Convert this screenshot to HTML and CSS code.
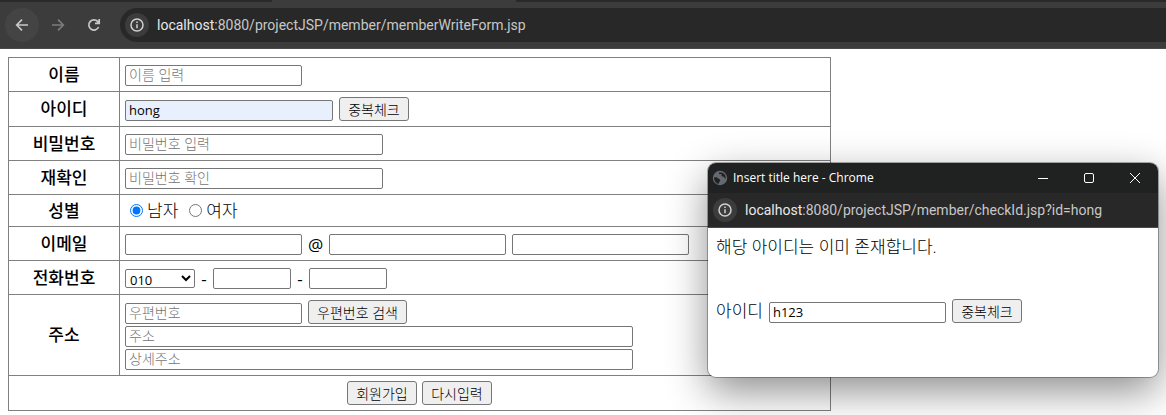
FILE: index.html
```html
<!DOCTYPE html>
<html lang="ko">
<head>
<meta charset="utf-8">
<title>회원가입</title>
<link rel="stylesheet" href="styles.css">
</head>
<body>
<header class="browser">
  <div class="tabstrip"><span class="tab-active"></span></div>
  <div class="toolbar">
    <button type="button" class="nav nav-back" aria-label="뒤로"><svg width="16" height="16" viewBox="0 0 16 16"><path d="M14 8H3M8 2.7 2.7 8 8 13.300"/></svg></button>
    <button type="button" class="nav nav-forward" aria-label="앞으로"><svg width="16" height="16" viewBox="0 0 16 16"><path d="M2 8h11M8 2.700 13.300 8 8 13.300"/></svg></button>
    <button type="button" class="nav nav-reload" aria-label="새로고침"><svg width="16" height="16" viewBox="0 0 16 16"><path d="M12.600 10a5.100 5.100 0 1 1-.8-5.400L13 6M13.200 2v4.300H9"/></svg></button>
    <div class="omnibox">
      <span class="info"><svg width="16" height="16" viewBox="0 0 16 16"><circle cx="8" cy="8" r="6"/><path d="M8 7.200v4M8 4.500v1.600"/></svg></span>
      <span class="url"><b>localhost</b>:8080/projectJSP/member/memberWriteForm.jsp</span>
    </div>
  </div>
</header>

<main class="page">
  <form>
    <table class="form-table">
      <tr>
        <th><label for="name">이름</label></th>
        <td><div class="fields"><input class="text" type="text" id="name" placeholder="이름 입력"></div></td>
      </tr>
      <tr>
        <th><label for="uid">아이디</label></th>
        <td><div class="fields"><input class="text text-id" type="text" id="uid" value="hong"><button type="button" class="btn">중복체크</button></div></td>
      </tr>
      <tr>
        <th><label for="pwd">비밀번호</label></th>
        <td><div class="fields"><input class="text text-pwd" type="password" id="pwd" placeholder="비밀번호 입력"></div></td>
      </tr>
      <tr>
        <th><label for="repwd">재확인</label></th>
        <td><div class="fields"><input class="text text-pwd" type="password" id="repwd" placeholder="비밀번호 확인"></div></td>
      </tr>
      <tr>
        <th>성별</th>
        <td><div class="radios">
          <label class="radio"><input type="radio" name="gender" checked>남자</label>
          <label class="radio"><input type="radio" name="gender">여자</label>
        </div></td>
      </tr>
      <tr>
        <th><label for="email1">이메일</label></th>
        <td><div class="fields">
          <input class="text" type="text" id="email1"><span class="sep">@</span><input class="text" type="text" aria-label="이메일 도메인"><input class="text" type="text" aria-label="이메일 도메인 선택">
        </div></td>
      </tr>
      <tr>
        <th><label for="tel1">전화번호</label></th>
        <td><div class="fields fields-tel">
          <select class="select" id="tel1"><option>010</option></select><span class="sep">-</span><input class="text text-tel" type="text" aria-label="전화번호 가운데 자리"><span class="sep">-</span><input class="text text-tel" type="text" aria-label="전화번호 끝 자리">
        </div></td>
      </tr>
      <tr>
        <th><label for="zipcode">주소</label></th>
        <td><div class="address">
          <div class="fields"><input class="text" type="text" id="zipcode" placeholder="우편번호"><button type="button" class="btn btn-zip">우편번호 검색</button></div>
          <input class="text text-addr" type="text" placeholder="주소" aria-label="주소">
          <input class="text text-addr" type="text" placeholder="상세주소" aria-label="상세주소">
        </div></td>
      </tr>
      <tr>
        <td colspan="2"><div class="actions">
          <button type="button" class="btn">회원가입</button>
          <button type="reset" class="btn">다시입력</button>
        </div></td>
      </tr>
    </table>
  </form>
</main>

<section class="popup" aria-label="checkId">
  <div class="titlebar">
    <svg class="globe" width="16" height="16" viewBox="0 0 16 16"><circle cx="8" cy="8" r="7.200" fill="#666a70"/><path d="M2 7.500c1.500-.4 3.300-.2 4 .8.6.9 2 .5 2.200 1.600.2 1-.9 1.400-1 2.400-.1.800-.4 1.300-1 1.600C3.600 13 2 10.800 2 7.500zM7 2.200c.2 1-.1 1.600.8 2 .8.300 1.100-.5 1.700 0 .6.600-.4 1.200-.1 1.900.5 1 2.100.3 2.800 1.100.5.600.4 1.300 1.500 1.500C14.300 5.600 12 2 7 2.200z" fill="#202222"/></svg>
    <span class="title">Insert title here - Chrome</span>
    <div class="controls">
      <button type="button" class="control" aria-label="최소화"><svg width="12" height="12" viewBox="0 0 12 12"><path d="M1 6.500h10"/></svg></button>
      <button type="button" class="control" aria-label="최대화"><svg width="12" height="12" viewBox="0 0 12 12"><rect x="1.500" y="1.500" width="9" height="9" rx="1.500"/></svg></button>
      <button type="button" class="control" aria-label="닫기"><svg width="12" height="12" viewBox="0 0 12 12"><path d="m1 1 10 10M11 1 1 11"/></svg></button>
    </div>
  </div>
  <div class="popup-url">
    <span class="info"><svg width="16" height="16" viewBox="0 0 16 16"><circle cx="8" cy="8" r="6"/><path d="M8 7.200v4M8 4.500v1.600"/></svg></span>
    <span class="url"><b>localhost</b>:8080/projectJSP/member/checkId.jsp?id=hong</span>
  </div>
  <form class="popup-body">
    <p class="message">해당 아이디는 이미 존재합니다.</p>
    <div class="check">
      <label for="checkid">아이디</label>
      <input class="text" type="text" id="checkid" value="h123">
      <button type="button" class="btn">중복체크</button>
    </div>
  </form>
</section>
</body>
</html>
```

FILE: styles.css
```css
* { box-sizing: border-box; }

body {
  position: relative;
  margin: 0;
  min-height: 100vh;
  overflow: hidden;
  background: #fff;
  color: #000;
  font: 300 17px/20px "Open Sans", "Noto Sans CJK KR", sans-serif;
}

svg { display: block; }

/* Browser chrome */
.browser {
  background: #3c3c3c;
  border-bottom: 1px solid #4b4a4a;
}

.tabstrip {
  display: flex;
  height: 2px;
  padding-left: 272px;
  background: #292929;
}

.tab-active {
  width: 244px;
  background: #3c3c3c;
}

.toolbar {
  display: flex;
  align-items: center;
  gap: 2px;
  padding: 6px 0 6px 5px;
}

.nav {
  display: grid;
  place-items: center;
  width: 34px;
  height: 34px;
  padding: 0;
  border: 0;
  border-radius: 50%;
  background: none;
  fill: none;
  stroke: #c7c7c7;
  stroke-width: 1.7;
}

.nav-back { background: #444; }
.nav-forward { stroke: #7c7c7c; }

.omnibox {
  display: flex;
  flex: 1;
  align-items: center;
  gap: 8px;
  height: 34px;
  margin-left: 7px;
  padding-left: 5px;
  border-radius: 17px 0 0 17px;
  background: #282828;
}

.info {
  display: grid;
  place-items: center;
  width: 24px;
  height: 24px;
  border-radius: 50%;
  background: #3c3c3c;
  fill: none;
  stroke: #d0d0d0;
  stroke-width: 1.5;
}

.url {
  color: #c7c7c7;
  font: 14px/20px Roboto, sans-serif;
  white-space: nowrap;
}

.url b {
  color: #e8e8e8;
  font-weight: 400;
}

/* Sign-up form */
.page { padding: 8px; }

.form-table {
  width: 100%;
  max-width: 823px;
  border-collapse: collapse;
}

.form-table th,
.form-table td {
  padding: 5px;
  border: 1px solid #808080;
}

.form-table th {
  width: 111px;
  padding: 0;
  font-weight: 500;
}

.fields {
  display: flex;
  align-items: flex-end;
  gap: 6px;
  min-height: 23px;
}

.text,
.select,
.btn {
  margin: 0;
  border: 1px solid #767676;
  color: #000;
  font: 13px/17px "Open Sans", "Noto Sans CJK KR", sans-serif;
}

.text {
  width: 177px;
  height: 21px;
  padding: 0 3px 2px;
  border-radius: 2px;
  background: #fff;
}

.text::placeholder {
  color: #757575;
  font-size: 14px;
  font-weight: 300;
}

.text-id {
  width: 208px;
  background: #e8f0fe;
}

.text-pwd { width: 258px; }
.text-tel { width: 78px; }
.text-addr { width: 508px; }

.btn {
  width: 70px;
  height: 24px;
  padding: 0;
  border-radius: 3px;
  background: #efefef;
  font-size: 14px;
  font-weight: 300;
  white-space: nowrap;
}

.btn-zip { width: 99px; }

.select {
  width: 70px;
  height: 19px;
  padding: 0 0 2px;
  border-radius: 2px;
  background: #fff;
}

.fields-tel { padding-top: 2px; align-items: center; }

.sep {
  min-width: 6px;
  font: 17px/20px "Open Sans", sans-serif;
  text-align: center;
}

.radios {
  display: flex;
  gap: 11px;
  padding-left: 5px;
}

.radio {
  display: flex;
  align-items: center;
  gap: 4px;
  height: 21px;
}

.radio input {
  width: 13px;
  height: 13px;
  margin: 0;
  accent-color: #0075ff;
}

.address {
  display: grid;
  gap: 2px;
}

.actions {
  display: flex;
  justify-content: center;
  gap: 5px;
}

/* Pop-up window */
.popup {
  position: absolute;
  top: 163px;
  right: 8px;
  width: 450px;
  border-radius: 8px;
  background: #fff;
  box-shadow: 0 0 0 1px rgba(0, 0, 0, 0.3), 0 14px 40px rgba(0, 0, 0, 0.45);
}

.titlebar {
  display: flex;
  align-items: center;
  height: 30px;
  padding-left: 4px;
  border-radius: 8px 8px 0 0;
  background: #202222;
}

.title {
  margin-left: 5px;
  color: #fff;
  font: 12px/16px "Open Sans", sans-serif;
}

.controls {
  display: flex;
  margin-left: auto;
}

.control {
  display: grid;
  place-items: center;
  width: 46px;
  height: 30px;
  padding: 0;
  border: 0;
  background: none;
  fill: none;
  stroke: #fff;
}

.popup-url {
  display: flex;
  align-items: center;
  gap: 8px;
  height: 35px;
  padding-left: 5px;
  border-bottom: 1px solid #4b4a4a;
  background: #282828;
}

.popup-body { padding: 9px 8px 54px; }

.message { margin: 0 0 42px; }

.check {
  display: flex;
  align-items: flex-end;
  gap: 6px;
  line-height: 24px;
}
```
